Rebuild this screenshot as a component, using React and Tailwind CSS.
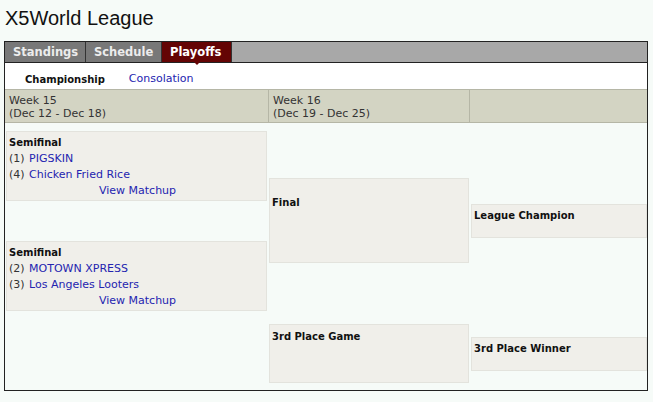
import React from "react";

function Box({ className = "", children }) {
  return (
    <div className={"ml-[1px] border border-[#e3e3dd] bg-[#f0efea] " + className}>
      {children}
    </div>
  );
}

function Semi({ a, b }) {
  return (
    <Box className="w-[261px] h-[70px] pl-[2px] pt-[3px] leading-[16px] text-[11px]">
      <div className="font-bold text-[10px] text-[#111]">Semifinal</div>
      <div className="text-[#333]">
        {a[0]} <span className="ml-[1px] text-[#2424b0]">{a[1]}</span>
      </div>
      <div className="text-[#333]">
        {b[0]} <span className="ml-[1px] text-[#2424b0]">{b[1]}</span>
      </div>
      <div className="text-center text-[#2424b0]">View Matchup</div>
    </Box>
  );
}

export default function App() {
  return (
    <div className="min-h-screen bg-[#f6fbf8] font-['DejaVu_Sans',sans-serif] text-[11px] text-[#222]">
      <h1 className="pl-[5px] pt-[7px] font-['Liberation_Sans',sans-serif] text-[20px] leading-[23px] text-[#111]">
        X5World League
      </h1>
      <div className="ml-[4px] mt-[11px] w-[644px] h-[350px] border border-[#222] flex flex-col">
        {/* Tabs */}
        <div className="flex h-[21px] bg-[#a8a8a8] border-b border-[#222]">
          <div className="flex items-center pl-[8px] pt-[1px] w-[81px] bg-[#787878] border-r border-[#333] text-[11.5px] font-bold text-[#ececec]">
            Standings
          </div>
          <div className="flex items-center pl-[8px] pt-[1px] w-[76px] bg-[#787878] border-r border-[#333] text-[11.5px] font-bold text-[#ececec]">
            Schedule
          </div>
          <div className="relative flex items-center pl-[8px] pt-[1px] w-[70px] bg-[#640404] border-r border-[#333] text-[11.5px] font-bold text-white">
            Playoffs
            <div className="absolute left-[32px] top-[20px] w-0 h-0 border-l-[3px] border-r-[3px] border-t-[3px] border-l-transparent border-r-transparent border-t-[#640404]" />
          </div>
        </div>
        {/* Sub tabs */}
        <div className="flex items-center h-[26px] bg-white pl-[20px] pt-[6px] gap-[24px]">
          <span className="font-bold text-[10px] text-[#111]">Championship</span>
          <span className="text-[#2424b0]">Consolation</span>
        </div>
        {/* Header */}
        <div className="flex h-[34px] bg-[#d3d4c3] border-t border-b border-[#b5b6a6] text-[#333] leading-[13px]">
          <div className="w-[264px] border-r border-[#b5b6a6] pl-[4px] pt-[4px]">
            <div>Week 15</div>
            <div>(Dec 12 - Dec 18)</div>
          </div>
          <div className="w-[201px] border-r border-[#b5b6a6] pl-[4px] pt-[4px]">
            <div>Week 16</div>
            <div>(Dec 19 - Dec 25)</div>
          </div>
          <div className="flex-1" />
        </div>
        {/* Bracket body */}
        <div className="flex flex-1">
          <div className="w-[263px] flex flex-col">
            <div className="mt-[8px]">
              <Semi a={["(1)", "PIGSKIN"]} b={["(4)", "Chicken Fried Rice"]} />
            </div>
            <div className="mt-[40px]">
              <Semi a={["(2)", "MOTOWN XPRESS"]} b={["(3)", "Los Angeles Looters"]} />
            </div>
          </div>
          <div className="w-[202px] flex flex-col">
            <div className="mt-[55px]">
              <Box className="w-[200px] h-[85px] pl-[2px] pt-[16px] leading-[16px] text-[10px] font-bold text-[#111]">
                Final
              </Box>
            </div>
            <div className="mt-[61px]">
              <Box className="w-[200px] h-[59px] pl-[2px] pt-[4px] leading-[16px] text-[10px] font-bold text-[#111]">
                3rd Place Game
              </Box>
            </div>
          </div>
          <div className="flex-1 flex flex-col">
            <div className="mt-[81px]">
              <Box className="w-[176px] h-[34px] pl-[2px] pt-[3px] leading-[16px] text-[10px] font-bold text-[#111]">
                League Champion
              </Box>
            </div>
            <div className="mt-[99px]">
              <Box className="w-[176px] h-[34px] pl-[2px] pt-[3px] leading-[16px] text-[10px] font-bold text-[#111]">
                3rd Place Winner
              </Box>
            </div>
          </div>
        </div>
      </div>
    </div>
  );
}
